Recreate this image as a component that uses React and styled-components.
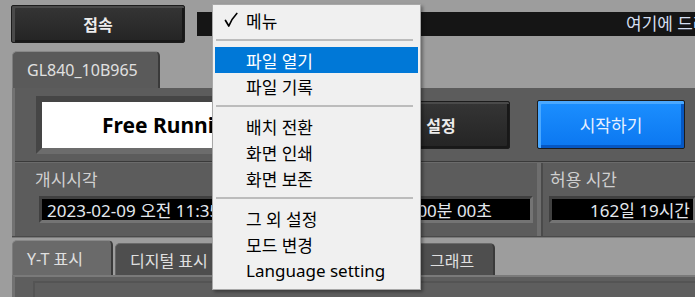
import React from "react";
import styled, { createGlobalStyle } from "styled-components";

const Global = createGlobalStyle`
  html, body { margin: 0; padding: 0; }
  body {
    background: #9d9d9d;
    width: 695px;
    height: 297px;
    overflow: hidden;
    font-family: "Noto Sans", "Noto Sans CJK KR", sans-serif;
  }
`;

const Screen = styled.div`
  position: relative;
  width: 695px;
  height: 297px;
  overflow: hidden;
  display: flex;
  flex-direction: column;
  background: #9d9d9d;
`;

const TopBar = styled.div`
  display: flex;
  align-items: flex-start;
  height: 51px;
  padding: 5px 0 0 11px;
  box-sizing: border-box;
  gap: 12px;
`;

const DarkButton = styled.div`
  flex: none;
  width: ${(p) => p.$w}px;
  height: ${(p) => p.$h}px;
  box-sizing: border-box;
  display: flex;
  align-items: center;
  justify-content: center;
  border: 1px solid #1c1c1c;
  border-radius: 2px;
  background: linear-gradient(#353535, #242424);
  box-shadow: inset 3px 2px 0 #4a4a4a, inset -2px -2px 0 #181818;
  color: #ececec;
  font: 700 16px "Noto Sans CJK KR", sans-serif;
`;

const BlueButton = styled(DarkButton)`
  background: linear-gradient(#1c8fff, #0b77f0);
  box-shadow: inset 3px 3px 0 #4aa8ff, inset -3px -3px 0 #0657c2;
  color: #e8f1ff;
  font-weight: 400;
  font-size: 17px;
`;

const StatusBar = styled.div`
  flex: 1;
  height: 24px;
  margin-top: 7px;
  background: #151515;
  color: #d4def0;
  font-size: 17px;
  line-height: 24px;
  white-space: nowrap;
  overflow: hidden;
  padding-left: 429px;
`;

const TabStrip = styled.div`
  display: flex;
  align-items: flex-end;
  height: ${(p) => p.$h}px;
  padding-left: 12px;
  gap: 2px;
  flex: none;
`;

const Tab = styled.div`
  flex: none;
  width: ${(p) => p.$w}px;
  height: ${(p) => (p.$active ? p.$h : p.$h - 3)}px;
  box-sizing: border-box;
  padding-left: 14px;
  display: flex;
  align-items: center;
  background: ${(p) => (p.$active ? p.$bg || "#6a6a6a" : "#4e4e4e")};
  border-top: 1px solid ${(p) => (p.$active ? "#888" : "#6a6a6a")};
  border-left: 1px solid ${(p) => (p.$active ? "#7d7d7d" : "#666")};
  border-right: 2px solid #3a3a3a;
  border-radius: 5px 5px 0 0;
  color: #e0e0e0;
  font-size: 16px;
  white-space: nowrap;
`;

const UpperPanel = styled.div`
  margin-left: 12px;
  height: 148px;
  flex: none;
  background: #5c5c5c;
  border-left: 3px solid #727272;
  display: flex;
  flex-direction: column;
`;

const ControlRow = styled.div`
  height: 73px;
  flex: none;
  display: flex;
  align-items: center;
  padding-left: 21px;
  border-bottom: 1px solid #3a3a3a;
  box-shadow: 0 1px 0 #6b6b6b;
`;

const ModeDisplay = styled.div`
  width: 325px;
  height: 58px;
  flex: none;
  box-sizing: border-box;
  background: #fff;
  border: 6px solid;
  border-color: #454545 #6c6c6c #6c6c6c #454545;
  color: #000;
  font: 700 21px "Noto Sans", sans-serif;
  display: flex;
  align-items: center;
  padding-left: 60px;
  margin-right: 11px;
  white-space: nowrap;
`;

const Spacer = styled.div`
  width: ${(p) => p.$w}px;
  flex: none;
`;

const InfoRow = styled.div`
  flex: 1;
  display: grid;
  grid-template-columns: 522px 1fr;
  padding-top: 1px;
`;

const InfoCell = styled.div`
  display: flex;
  flex-direction: column;
  padding-left: ${(p) => p.$pl}px;
  padding-top: 6px;
  ${(p) => p.$divider && "border-left: 4px solid #6e6e6e; box-shadow: inset 2px 0 0 #4a4a4a;"}
`;

const Label = styled.div`
  height: 22px;
  color: #d0d0d0;
  font-size: 17px;
  line-height: 22px;
  white-space: nowrap;
`;

const Field = styled.div`
  margin-top: 5px;
  margin-left: ${(p) => p.$ml}px;
  width: ${(p) => p.$w}px;
  height: 27px;
  background: #000;
  border: 3px solid;
  border-color: #404040 #747474 #747474 #404040;
  box-sizing: border-box;
  display: flex;
  align-items: center;
  justify-content: ${(p) => (p.$right ? "flex-end" : "space-between")};
  padding: 0 ${(p) => (p.$right ? 3 : 0)}px 0 5px;
  color: #e4e8ee;
  font-size: 17px;
  white-space: nowrap;
  overflow: hidden;
`;

const Elapsed = styled.span`
  padding-right: 38px;
`;

const LowerPanel = styled.div`
  margin-left: 12px;
  flex: 1;
  background: #5e5e5e;
  border-top: 2px solid #7a7a7a;
  border-left: 3px solid #727272;
  box-shadow: inset 18px 4px 0 #5e5e5e, inset 20px 6px 0 #545454;
`;

const Ridge = styled.div`
  height: 4px;
  flex: none;
  margin-left: 12px;
  background: linear-gradient(#4a4a4a 0 1px, #7a7a7a 1px 2px, #9d9d9d 2px);
`;

/* ---------- dropdown menu ---------- */

const Menu = styled.div`
  position: absolute;
  left: 212px;
  top: 4px;
  width: 209px;
  height: 286px;
  box-sizing: border-box;
  background: #f0f0f0;
  border: 1px solid #a8a8a8;
  box-shadow: 2px 2px 3px rgba(0, 0, 0, 0.35);
  padding: 2px 2px 6px;
  font-family: "Noto Sans", "Noto Sans CJK KR", sans-serif;
`;

const MenuItem = styled.div`
  height: 26px;
  display: flex;
  align-items: center;
  background: ${(p) => (p.$hot ? "#0078d7" : "transparent")};
  color: ${(p) => (p.$hot ? "#fff" : "#000")};
  font-size: 17px;
  font-weight: 400;
  white-space: nowrap;
`;

const CheckSlot = styled.span`
  width: 31px;
  height: 26px;
  flex: none;
  display: flex;
  align-items: center;
  padding-left: 9px;
  box-sizing: border-box;
`;

const Separator = styled.div`
  height: 14px;
  display: flex;
  align-items: center;
  padding: 0 5px 0 1px;
  &::after {
    content: "";
    flex: 1;
    height: 2px;
    background: #bcbcbc;
  }
`;

const CheckIcon = () => (
  <svg width="14" height="16" viewBox="0 0 14 16">
    <path
      d="M1.5 8.5 L4.8 14 Q7.5 7 12.8 1.5"
      fill="none"
      stroke="#000"
      strokeWidth="1.7"
      strokeLinecap="round"
      strokeLinejoin="round"
    />
  </svg>
);

const menu = [
  { label: "메뉴", check: true },
  "-",
  { label: "파일 열기", hot: true },
  { label: "파일 기록" },
  "-",
  { label: "배치 전환" },
  { label: "화면 인쇄" },
  { label: "화면 보존" },
  "-",
  { label: "그 외 설정" },
  { label: "모드 변경" },
  { label: "Language setting" },
];

export default function App() {
  return (
    <>
      <Global />
      <Screen>
        <TopBar>
          <DarkButton $w={174} $h={38}>접속</DarkButton>
          <StatusBar>여기에 드래그 앤 드롭</StatusBar>
        </TopBar>

        <TabStrip $h={37}>
          <Tab $active $w={148} $h={37} $bg="#5a5a5a">GL840_10B965</Tab>
        </TabStrip>

        <UpperPanel>
          <ControlRow>
            <ModeDisplay>Free Running</ModeDisplay>
            <DarkButton $w={138} $h={48}>설정</DarkButton>
            <Spacer $w={27} />
            <BlueButton $w={148} $h={49}>시작하기</BlueButton>
          </ControlRow>
          <InfoRow>
            <InfoCell $pl={20}>
              <Label>개시시각</Label>
              <Field $ml={4} $w={494}>
                <span>2023-02-09 오전 11:35</span>
                <Elapsed>0시간 00분 00초</Elapsed>
              </Field>
            </InfoCell>
            <InfoCell $pl={9} $divider>
              <Label>허용 시간</Label>
              <Field $ml={-1} $w={147} $right>162일 19시간</Field>
            </InfoCell>
          </InfoRow>
        </UpperPanel>

        <Ridge />

        <TabStrip $h={35}>
          <Tab $active $w={101} $h={35}>Y-T 표시</Tab>
          <Tab $w={115} $h={35}>디지털 표시</Tab>
          <Tab $w={181} $h={35}>로직/펄스 표시</Tab>
          <Tab $w={80} $h={35}>그래프</Tab>
        </TabStrip>

        <LowerPanel />

        <Menu>
          {menu.map((m, i) =>
            m === "-" ? (
              <Separator key={i} />
            ) : (
              <MenuItem key={i} $hot={m.hot}>
                <CheckSlot>{m.check ? <CheckIcon /> : null}</CheckSlot>
                {m.label}
              </MenuItem>
            )
          )}
        </Menu>
      </Screen>
    </>
  );
}
